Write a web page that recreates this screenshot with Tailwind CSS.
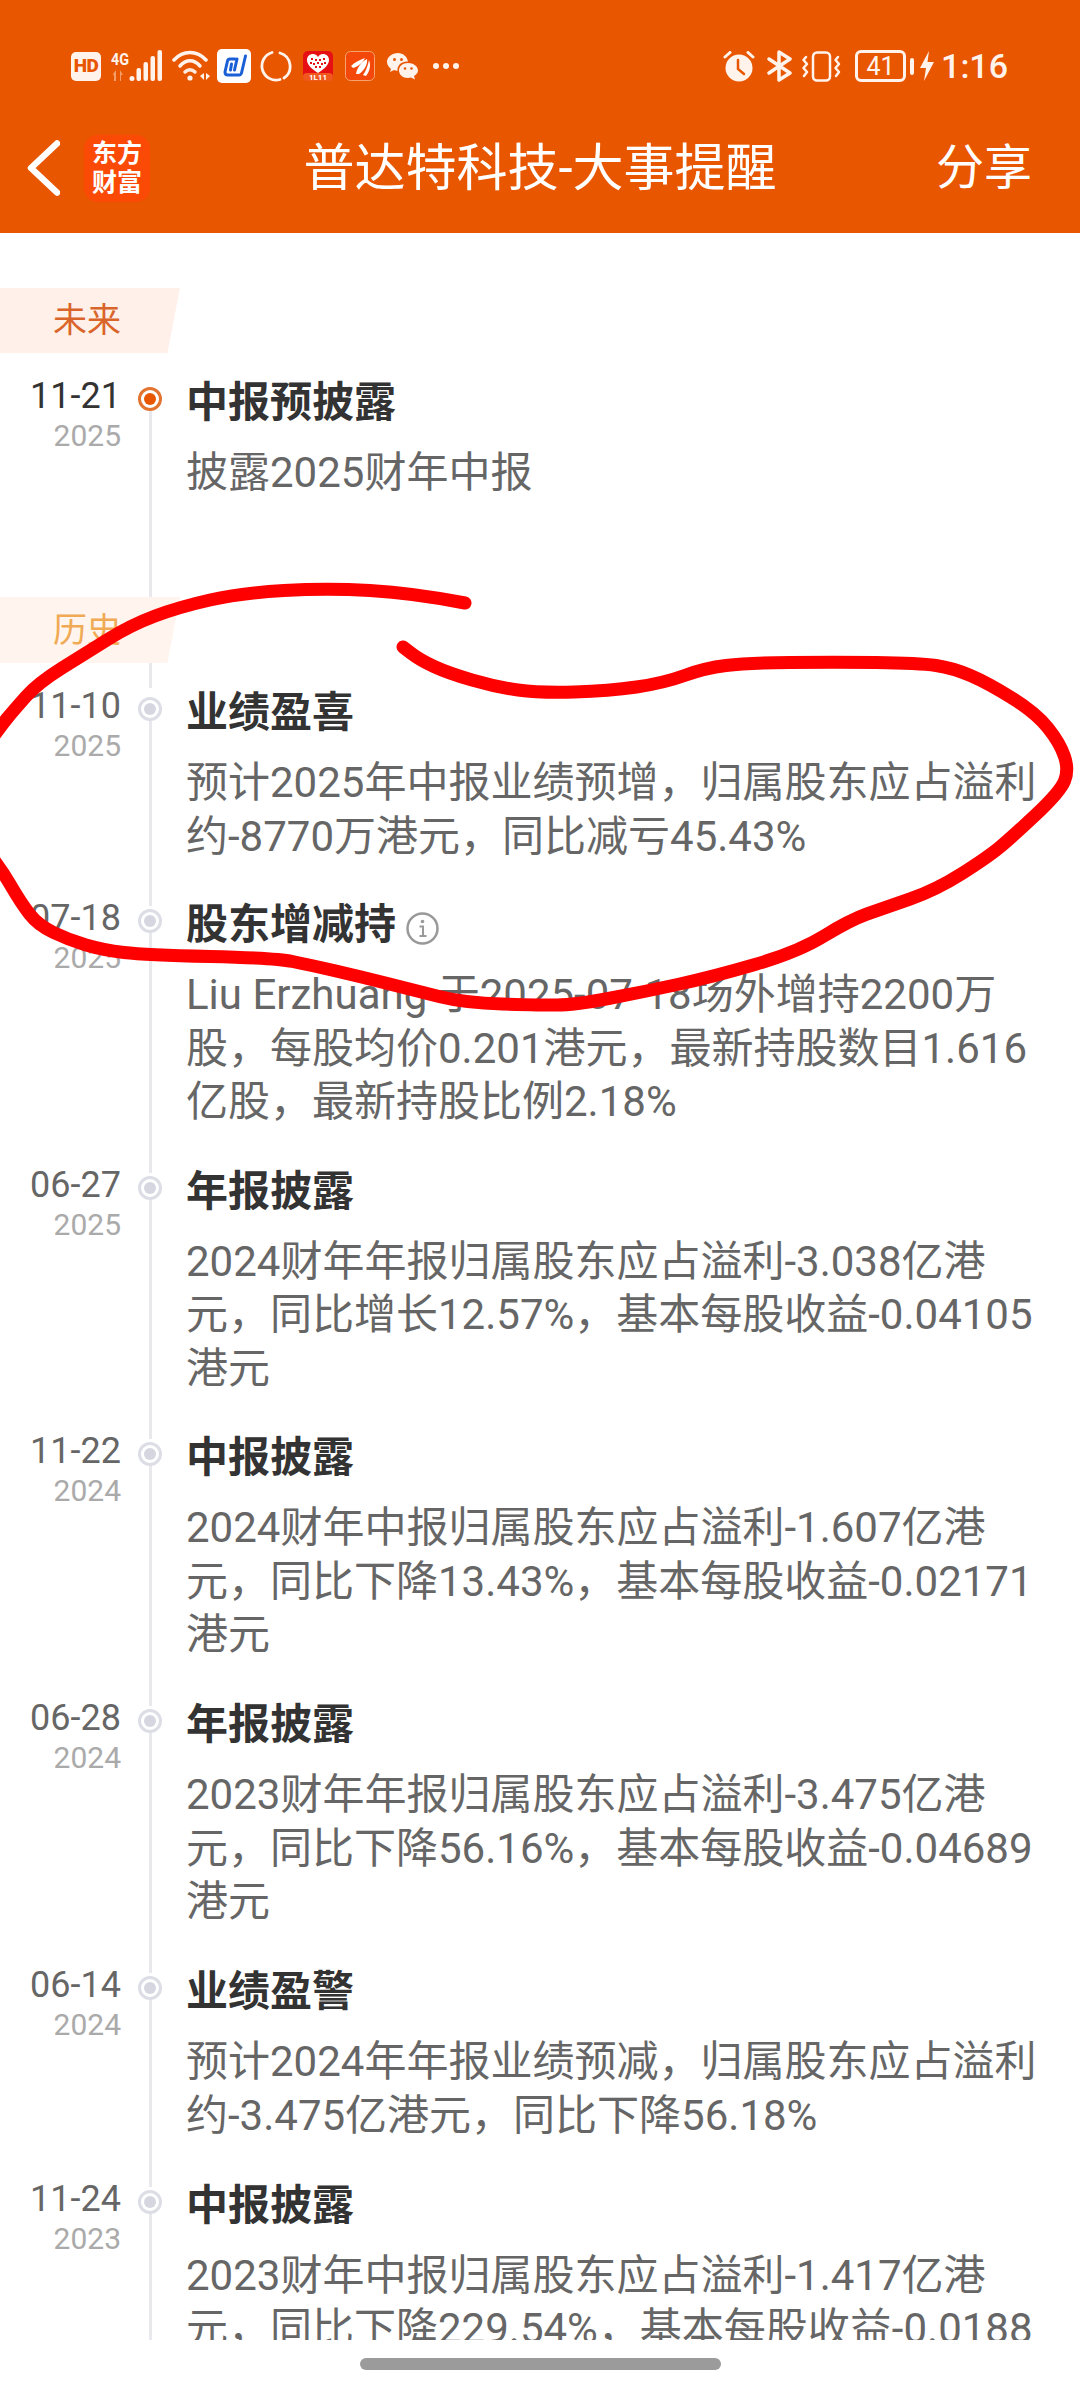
<!DOCTYPE html>
<html lang="zh-CN">

<head>
    <meta charset="UTF-8">
    <meta name="viewport" content="width=device-width, initial-scale=1.0">
    <title>普达特科技-大事提醒</title>
    <script src="https://cdn.jsdelivr.net/npm/@tailwindcss/browser@4"></script>
</head>

<body class="bg-white font-['Roboto','Noto_Sans_CJK_SC',sans-serif]">
    <div class="relative w-[1080px] h-[2388px] overflow-hidden bg-white">
        <header class="h-[233px] bg-[#e85600] text-white">
            <!-- status bar -->
            <div class="h-[103px] pt-[29px] pl-[71px] pr-[72px] flex items-center justify-between text-[#fff3ec]">
                <div class="flex items-center">
                    <div class="w-[30px] h-[29px] rounded-[5px] bg-[#fff3ec] text-[#e85600] text-[19px] font-black flex items-center justify-center tracking-[-0.5px]">HD</div>
                    <svg class="ml-[10px] w-[52px] h-[32px]" viewBox="0 0 52 32" fill="currentColor">
                        <text x="0" y="15" font-size="17" font-weight="700" textLength="18" lengthAdjust="spacingAndGlyphs">4G</text>
                        <path d="M2 24l3-4v11h-2v-5zM9 20l3 5-2 0v6h-1z" opacity=".45" />
                        <circle cx="21" cy="28.500" r="2.500" />
                        <rect x="25.500" y="18" width="4.500" height="13" rx="2" />
                        <rect x="32.500" y="12" width="4.500" height="19" rx="2" />
                        <rect x="39.500" y="6" width="4.500" height="25" rx="2" />
                        <rect x="46.500" y="0" width="4.500" height="31" rx="2" />
                    </svg>
                    <svg class="ml-[9px] w-[38px] h-[32px]" viewBox="0 0 38 32" fill="none" stroke="currentColor" stroke-width="3.500" stroke-linecap="round">
                        <path d="M2 10C11 0 25 0 34 10" />
                        <path d="M8 16C14 9 22 9 28 16" />
                        <path d="M13 22C16 19 20 19 23 22" opacity=".95" />
                        <circle cx="18" cy="28" r="2.600" fill="currentColor" stroke="none" />
                        <path d="M28 26l4-3v7zM34 23l4 3-4 4z" fill="currentColor" stroke="none" />
                    </svg>
                    <svg class="ml-[7px] w-[34px] h-[34px]" viewBox="0 0 34 34">
                        <rect width="34" height="34" rx="5" fill="#fff" />
                        <g fill="none" stroke="#1a5fd6" stroke-width="3" stroke-linecap="round" stroke-linejoin="round">
                            <path d="M18 10H13Q11 10 10.500 12L8 23Q8 26 11 26H22Q24 26 24.500 24L28.500 7" />
                            <path d="M20 10L17.500 21M14.500 15L13.500 21" />
                        </g>
                    </svg>
                    <svg class="ml-[9px] w-[32px] h-[32px]" viewBox="0 0 32 32" fill="none" stroke="currentColor" stroke-width="2.800" stroke-linecap="round">
                        <path d="M20 3A14 14 0 0 1 24 28" />
                        <path d="M20 29.500A14 14 0 0 1 12 2.500" />
                    </svg>
                    <svg class="ml-[11px] w-[30px] h-[30px]" viewBox="0 0 30 30">
                        <rect width="30" height="30" rx="5" fill="#e60f14" />
                        <rect y="22" width="30" height="8" rx="4" fill="#f0581e" />
                        <path d="M15 22C9 18 4 14 4 9C4 5 7 3 10 3C12 3 14 4 15 6C16 4 18 3 20 3C23 3 26 5 26 9C26 14 21 18 15 22Z" fill="#fff" />
                        <path d="M8 7h2v2H8zM12 8h2v2h-2zM16 8h2v2h-2zM20 7h2v2h-2zM7 11h2v2H7zM10 12h2v2h-2zM14 11h2v2h-2zM18 12h2v2h-2zM21 11h2v2h-2zM12 15h2v2h-2zM16 15h2v2h-2z" fill="#e60f14" />
                        <text x="15" y="29" font-size="8" font-weight="700" fill="#fff" text-anchor="middle">1L11</text>
                    </svg>
                    <svg class="ml-[12px] w-[30px] h-[30px]" viewBox="0 0 30 30">
                        <rect x=".5" y=".5" width="29" height="29" rx="5" fill="#f4470a" stroke="#f7a36f" />
                        <path d="M6 15C10 11 15 9 20 7C18 12 12 16 8 17ZM11 23C12 17 16 11 22 8C23 13 19 20 14 23ZM18 24C21 20 23 14 24 9C26 14 25 20 21 25Z" fill="#fff" />
                    </svg>
                    <svg class="ml-[12px] w-[31px] h-[27px]" viewBox="0 0 31 27" fill="currentColor">
                        <path d="M11 0C5 0 0 4 0 9C0 12 2 14 4 16L3 19L7 17C8 17.500 9 17.700 10.500 17.800C10 12 15 8 21 8.500C20 3.500 16 0 11 0Z" />
                        <path d="M21 10C15.500 10 12 13.500 12 17.500C12 21.500 15.500 25 21 25C22 25 23 24.800 24 24.500L28 26.500L27 23C29.500 21.500 31 19.500 31 17.500C31 13.500 26.500 10 21 10Z" />
                        <circle cx="7.500" cy="6.500" r="1.500" fill="#e85600" />
                        <circle cx="14.500" cy="6.500" r="1.500" fill="#e85600" />
                        <circle cx="18" cy="15.500" r="1.300" fill="#e85600" />
                        <circle cx="24.500" cy="15.500" r="1.300" fill="#e85600" />
                    </svg>
                    <div class="ml-[15px] flex gap-[4px]">
                        <span class="w-[6px] h-[6px] rounded-full bg-[#fff3ec]"></span>
                        <span class="w-[6px] h-[6px] rounded-full bg-[#fff3ec]"></span>
                        <span class="w-[6px] h-[6px] rounded-full bg-[#fff3ec]"></span>
                    </div>
                </div>
                <div class="flex items-center">
                    <svg class="w-[32px] h-[31px]" viewBox="0 0 32 31" fill="none" stroke="currentColor" stroke-width="3" stroke-linecap="round">
                        <path d="M2 6L7 1.500M30 6L25 1.500" />
                        <circle cx="16" cy="17" r="13.500" fill="currentColor" stroke="none" />
                        <path d="M15 9V18L21 23" stroke="#e85600" stroke-width="2.500" />
                    </svg>
                    <svg class="ml-[12px] w-[25px] h-[32px]" viewBox="0 0 25 32" fill="none" stroke="currentColor" stroke-width="3.500" stroke-linejoin="round" stroke-linecap="round">
                        <path d="M2 9L23 23L12 30V2L23 9L2 23" />
                    </svg>
                    <svg class="ml-[10px] w-[40px] h-[31px]" viewBox="0 0 40 31" fill="none" stroke="currentColor" stroke-width="2.500" stroke-linecap="round" stroke-linejoin="round">
                        <rect x="11" y="1.500" width="17" height="28" rx="4" />
                        <path d="M4 6L1.500 9L5 13L1.500 17L5 21L2 25" />
                        <path d="M36 6L33.500 9L37 13L33.500 17L37 21L34 25" />
                    </svg>
                    <div class="ml-[13px] w-[51px] h-[32px] rounded-[6px] border-[3px] border-[#fff3ec] text-[25px] leading-none flex items-center justify-center">41</div>
                    <span class="ml-[4px] w-[4px] h-[17px] rounded-full bg-[#fff3ec]"></span>
                    <svg class="ml-[6px] w-[14px] h-[30px]" viewBox="0 0 14 30" fill="currentColor">
                        <path d="M9 0L0 17H6L4 30L14 11H7.500Z" />
                    </svg>
                    <span class="ml-[7px] text-[34px] leading-none font-medium">1:16</span>
                </div>
            </div>
            <!-- title bar -->
            <div class="h-[130px] grid grid-cols-[1fr_auto_1fr] items-center">
                <div class="flex items-center pl-[27px]">
                    <svg class="w-[33px] h-[56px]" viewBox="0 0 33 56" fill="none" stroke="#fff" stroke-width="6.500" stroke-linecap="round" stroke-linejoin="round">
                        <path d="M30 3.500L4 28L30 52.500" />
                    </svg>
                    <div class="ml-[24px] w-[66px] h-[67px] rounded-[14px] bg-[#fb4a06] text-[25px] leading-[29px] font-bold text-center flex flex-col justify-center">
                        <span>东方</span><span>财富</span>
                    </div>
                </div>
                <h1 class="text-[51px] leading-none font-normal">普达特科技-大事提醒</h1>
                <div class="text-right pr-[48px] text-[48px] leading-none">分享</div>
            </div>
        </header>

        <main class="relative h-[2107px] overflow-hidden pt-[55px]">
            <!-- timeline rail -->
            <div class="absolute left-[149px] top-[166px] bottom-0 w-[3px] bg-[#e9e9ed]"></div>

            <section class="relative">
                <div class="w-[180px] h-[65px] pl-[53px] bg-[#fff0ea] text-[#d9652b] text-[34px] leading-[65px] [clip-path:polygon(0_0,100%_0,93%_100%,0_100%)]">未来</div>
                <div class="mt-[18px] grid grid-cols-[121px_65px_1fr] h-[226px]">
                    <div class="text-right">
                        <div class="text-[36px] leading-[50px] text-[#333]">11-21</div>
                        <div class="text-[30px] leading-[30px] text-[#aaa]">2025</div>
                    </div>
                    <div class="pt-[16px] pl-[17px]">
                        <div class="w-[24px] h-[24px] rounded-full border-[3px] border-[#e2742f] bg-white flex items-center justify-center">
                            <span class="w-[12px] h-[12px] rounded-full bg-[#e85600]"></span>
                        </div>
                    </div>
                    <div class="pt-[4px]">
                        <h2 class="text-[42px] leading-[56px] font-bold text-[#333]">中报预披露</h2>
                        <p class="mt-[15px] w-[855px] break-all text-[42px] leading-[53.5px] text-[#666]">披露2025财年中报</p>
                    </div>
                </div>
            </section>

            <section class="relative">
                <div class="w-[180px] h-[66px] pl-[53px] bg-[#fff5ee] text-[#f0aa55] text-[34px] leading-[66px] [clip-path:polygon(0_0,100%_0,93%_100%,0_100%)]">历史</div>
                <div class="mt-[18px]">

                    <div class="grid grid-cols-[121px_65px_1fr] pb-[30px]">
                        <div class="text-right">
                            <div class="text-[36px] leading-[50px] text-[#666]">11-10</div>
                            <div class="text-[30px] leading-[30px] text-[#aaa]">2025</div>
                        </div>
                        <div class="pt-[16px] pl-[17px]">
                            <div class="w-[24px] h-[24px] rounded-full border-[3px] border-[#dcdde5] bg-white shadow-[0_-9px_0_0_white] flex items-center justify-center">
                                <span class="w-[12px] h-[12px] rounded-full bg-[#d5d6e0]"></span>
                            </div>
                        </div>
                        <div class="pt-[4px]">
                            <h2 class="text-[42px] leading-[56px] font-bold text-[#333]">业绩盈喜</h2>
                            <p class="mt-[15px] w-[855px] break-all text-[42px] leading-[53.5px] text-[#666]">预计2025年中报业绩预增，归属股东应占溢利约-8770万港元，同比减亏45.43%</p>
                        </div>
                    </div>

                    <div class="grid grid-cols-[121px_65px_1fr] pb-[31px]">
                        <div class="text-right">
                            <div class="text-[36px] leading-[50px] text-[#666]">07-18</div>
                            <div class="text-[30px] leading-[30px] text-[#aaa]">2025</div>
                        </div>
                        <div class="pt-[16px] pl-[17px]">
                            <div class="w-[24px] h-[24px] rounded-full border-[3px] border-[#dcdde5] bg-white shadow-[0_-3px_0_0_white] flex items-center justify-center">
                                <span class="w-[12px] h-[12px] rounded-full bg-[#d5d6e0]"></span>
                            </div>
                        </div>
                        <div class="pt-[4px]">
                            <h2 class="flex items-center gap-[10px] text-[42px] leading-[56px] font-bold text-[#333]">股东增减持
                                <svg class="mt-[6px] w-[33px] h-[33px]" viewBox="0 0 33 33" fill="none" stroke="#999" stroke-width="2.500">
                                    <circle cx="16.500" cy="16.500" r="15" />
                                    <path d="M13.500 14.500H17V24M13.500 24H20.500" stroke-width="2" />
                                    <circle cx="16.500" cy="9.500" r="1.800" fill="#999" stroke="none" />
                                </svg>
                            </h2>
                            <p class="mt-[15px] w-[855px] break-all text-[42px] leading-[53.5px] text-[#666]">Liu Erzhuang 于2025-07-18场外增持2200万股，每股均价0.201港元，最新持股数目1.616亿股，最新持股比例2.18%</p>
                        </div>
                    </div>

                    <div class="grid grid-cols-[121px_65px_1fr] pb-[31px]">
                        <div class="text-right">
                            <div class="text-[36px] leading-[50px] text-[#666]">06-27</div>
                            <div class="text-[30px] leading-[30px] text-[#aaa]">2025</div>
                        </div>
                        <div class="pt-[16px] pl-[17px]">
                            <div class="w-[24px] h-[24px] rounded-full border-[3px] border-[#dcdde5] bg-white shadow-[0_-3px_0_0_white] flex items-center justify-center">
                                <span class="w-[12px] h-[12px] rounded-full bg-[#d5d6e0]"></span>
                            </div>
                        </div>
                        <div class="pt-[4px]">
                            <h2 class="text-[42px] leading-[56px] font-bold text-[#333]">年报披露</h2>
                            <p class="mt-[15px] w-[855px] break-all text-[42px] leading-[53.5px] text-[#666]">2024财年年报归属股东应占溢利-3.038亿港元，同比增长12.57%，基本每股收益-0.04105港元</p>
                        </div>
                    </div>

                    <div class="grid grid-cols-[121px_65px_1fr] pb-[31.500px]">
                        <div class="text-right">
                            <div class="text-[36px] leading-[50px] text-[#666]">11-22</div>
                            <div class="text-[30px] leading-[30px] text-[#aaa]">2024</div>
                        </div>
                        <div class="pt-[16px] pl-[17px]">
                            <div class="w-[24px] h-[24px] rounded-full border-[3px] border-[#dcdde5] bg-white shadow-[0_-3px_0_0_white] flex items-center justify-center">
                                <span class="w-[12px] h-[12px] rounded-full bg-[#d5d6e0]"></span>
                            </div>
                        </div>
                        <div class="pt-[4px]">
                            <h2 class="text-[42px] leading-[56px] font-bold text-[#333]">中报披露</h2>
                            <p class="mt-[15px] w-[855px] break-all text-[42px] leading-[53.5px] text-[#666]">2024财年中报归属股东应占溢利-1.607亿港元，同比下降13.43%，基本每股收益-0.02171港元</p>
                        </div>
                    </div>

                    <div class="grid grid-cols-[121px_65px_1fr] pb-[31.500px]">
                        <div class="text-right">
                            <div class="text-[36px] leading-[50px] text-[#666]">06-28</div>
                            <div class="text-[30px] leading-[30px] text-[#aaa]">2024</div>
                        </div>
                        <div class="pt-[16px] pl-[17px]">
                            <div class="w-[24px] h-[24px] rounded-full border-[3px] border-[#dcdde5] bg-white shadow-[0_-3px_0_0_white] flex items-center justify-center">
                                <span class="w-[12px] h-[12px] rounded-full bg-[#d5d6e0]"></span>
                            </div>
                        </div>
                        <div class="pt-[4px]">
                            <h2 class="text-[42px] leading-[56px] font-bold text-[#333]">年报披露</h2>
                            <p class="mt-[15px] w-[855px] break-all text-[42px] leading-[53.5px] text-[#666]">2023财年年报归属股东应占溢利-3.475亿港元，同比下降56.16%，基本每股收益-0.04689港元</p>
                        </div>
                    </div>

                    <div class="grid grid-cols-[121px_65px_1fr] pb-[31.500px]">
                        <div class="text-right">
                            <div class="text-[36px] leading-[50px] text-[#666]">06-14</div>
                            <div class="text-[30px] leading-[30px] text-[#aaa]">2024</div>
                        </div>
                        <div class="pt-[16px] pl-[17px]">
                            <div class="w-[24px] h-[24px] rounded-full border-[3px] border-[#dcdde5] bg-white shadow-[0_-3px_0_0_white] flex items-center justify-center">
                                <span class="w-[12px] h-[12px] rounded-full bg-[#d5d6e0]"></span>
                            </div>
                        </div>
                        <div class="pt-[4px]">
                            <h2 class="text-[42px] leading-[56px] font-bold text-[#333]">业绩盈警</h2>
                            <p class="mt-[15px] w-[855px] break-all text-[42px] leading-[53.5px] text-[#666]">预计2024年年报业绩预减，归属股东应占溢利约-3.475亿港元，同比下降56.18%</p>
                        </div>
                    </div>

                    <div class="grid grid-cols-[121px_65px_1fr] pb-[31.500px]">
                        <div class="text-right">
                            <div class="text-[36px] leading-[50px] text-[#666]">11-24</div>
                            <div class="text-[30px] leading-[30px] text-[#aaa]">2023</div>
                        </div>
                        <div class="pt-[16px] pl-[17px]">
                            <div class="w-[24px] h-[24px] rounded-full border-[3px] border-[#dcdde5] bg-white shadow-[0_-3px_0_0_white] flex items-center justify-center">
                                <span class="w-[12px] h-[12px] rounded-full bg-[#d5d6e0]"></span>
                            </div>
                        </div>
                        <div class="pt-[4px]">
                            <h2 class="text-[42px] leading-[56px] font-bold text-[#333]">中报披露</h2>
                            <p class="mt-[15px] w-[855px] break-all text-[42px] leading-[53.5px] text-[#666]">2023财年中报归属股东应占溢利-1.417亿港元，同比下降229.54%，基本每股收益-0.0188</p>
                        </div>
                    </div>

                </div>
            </section>
        </main>

        <!-- gesture bar -->
        <div class="h-[48px] pt-[18px] flex justify-center">
            <div class="w-[361px] h-[12px] rounded-full bg-[#9b9b9b]"></div>
        </div>

        <!-- red pen scribble on top of the screenshot -->
        <svg class="absolute inset-0 pointer-events-none" width="1080" height="2388" viewBox="0 0 1080 2388" fill="none">
            <path id="scribble" stroke="#ff0000" stroke-width="13" stroke-linecap="round" stroke-linejoin="round" />
        </svg>
    </div>

    <script>
        const pts = [[465, 603], [413, 593], [327, 588], [241, 593], [179, 607], [131, 625], [86, 653], [38, 683], [14, 710], [0, 727], [-30, 770], [-30, 830], [0, 867], [21, 903], [38, 925], [69, 940], [103, 950], [145, 955], [275, 958], [310, 965], [362, 977], [413, 990], [465, 1003], [540, 1005], [574, 1005], [643, 992], [712, 977], [798, 952], [850, 920], [884, 908], [936, 890], [988, 857], [1012, 837], [1060, 792], [1069, 770], [1060, 743], [1036, 713], [988, 683], [953, 668], [919, 663], [833, 662], [747, 663], [705, 668], [664, 683], [609, 691], [540, 693], [496, 687], [448, 673], [420, 660], [403, 647]];
        // smooth through the midpoints
        let d = `M${pts[0][0]} ${pts[0][1]}`;
        for (let i = 1; i < pts.length - 1; i++) {
            const mx = (pts[i][0] + pts[i + 1][0]) / 2;
            const my = (pts[i][1] + pts[i + 1][1]) / 2;
            d += `Q${pts[i][0]} ${pts[i][1]} ${mx} ${my}`;
        }
        d += `L${pts[pts.length - 1][0]} ${pts[pts.length - 1][1]}`;
        document.getElementById('scribble').setAttribute('d', d);
    </script>
</body>

</html>
